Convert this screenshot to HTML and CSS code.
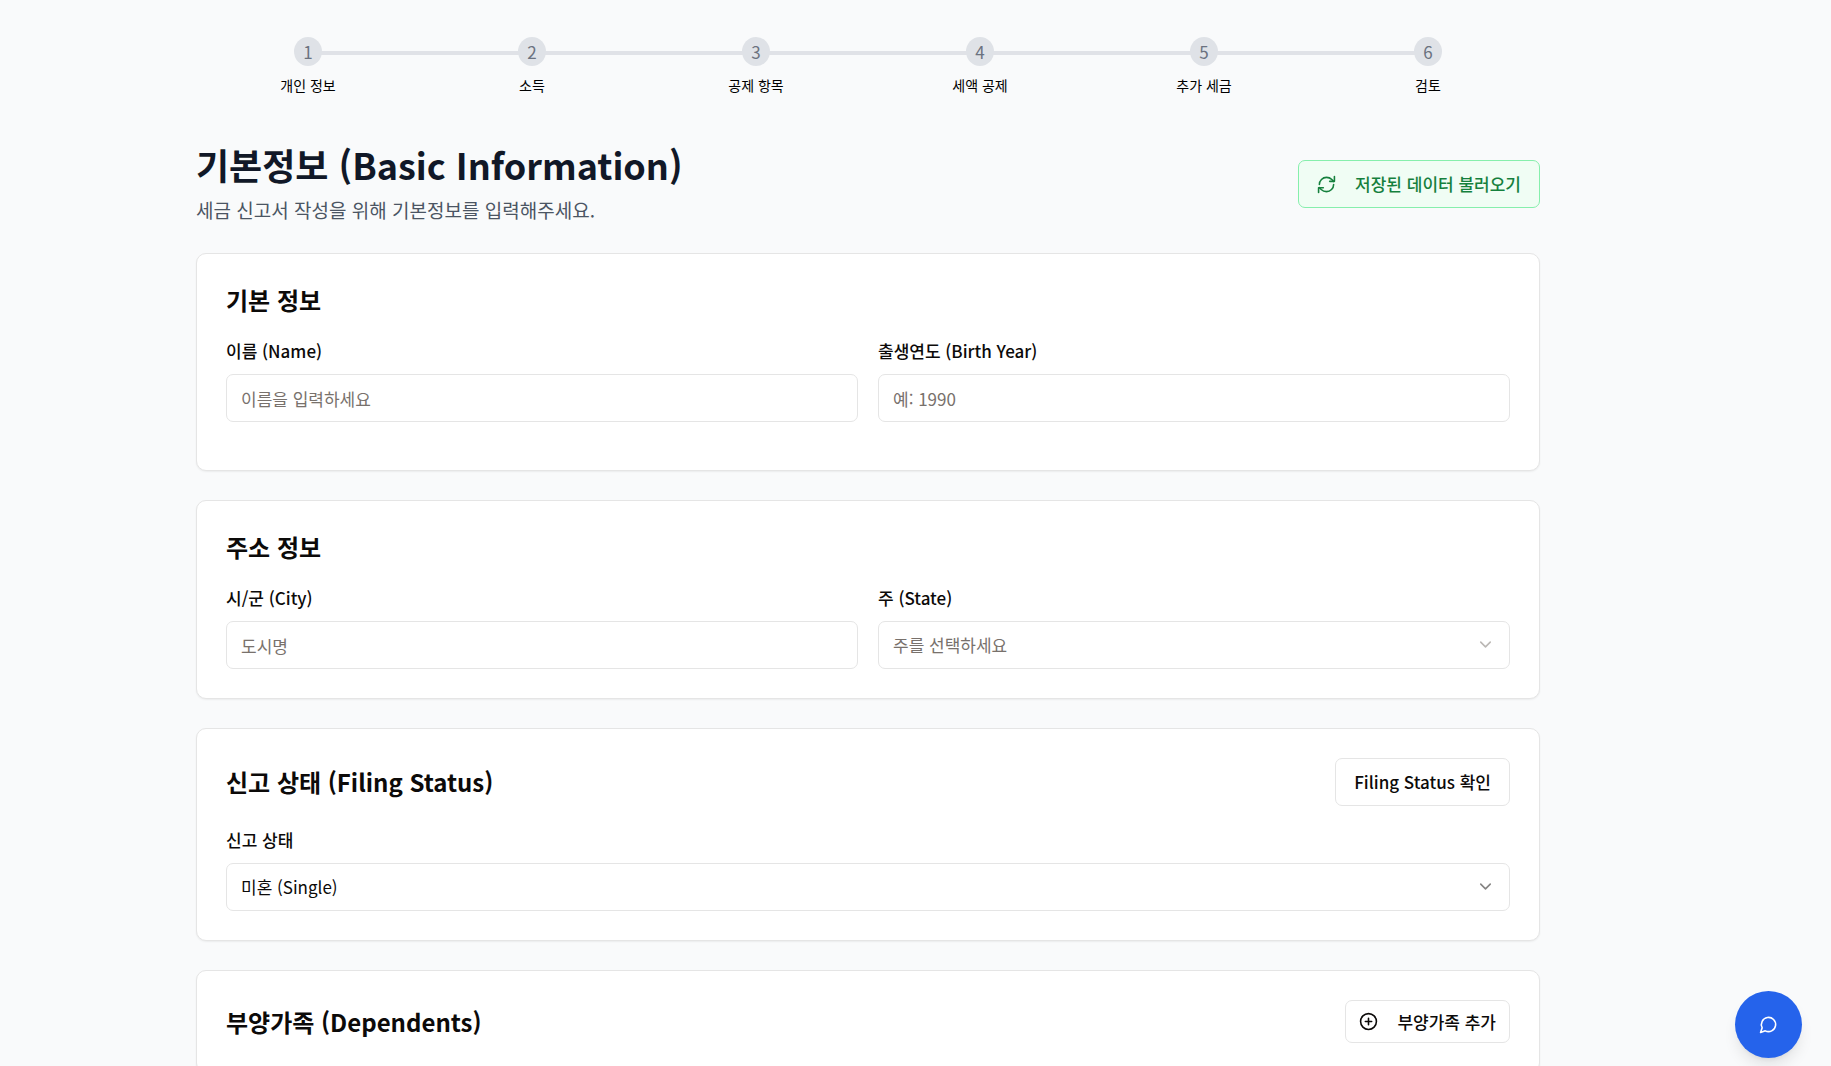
FILE: index.html
```html
<!DOCTYPE html>
<html lang="ko">
<head>
<meta charset="utf-8">
<meta name="viewport" content="width=device-width, initial-scale=1">
<title>기본정보 (Basic Information)</title>
<link rel="stylesheet" href="styles.css">
</head>
<body>
<main class="page">
  <ol class="steps">
    <li class="step"><span class="step-number">1</span><span class="step-label">개인 정보</span></li>
    <li class="step"><span class="step-number">2</span><span class="step-label">소득</span></li>
    <li class="step"><span class="step-number">3</span><span class="step-label">공제 항목</span></li>
    <li class="step"><span class="step-number">4</span><span class="step-label">세액 공제</span></li>
    <li class="step"><span class="step-number">5</span><span class="step-label">추가 세금</span></li>
    <li class="step"><span class="step-number">6</span><span class="step-label">검토</span></li>
  </ol>

  <header class="page-header">
    <div>
      <h1 class="page-title">기본정보 (Basic Information)</h1>
      <p class="page-subtitle">세금 신고서 작성을 위해 기본정보를 입력해주세요.</p>
    </div>
    <button type="button" class="button button-load">
      <svg class="icon" viewBox="0 0 24 24" aria-hidden="true"><path d="M3 12a9 9 0 0 1 9-9 9.75 9.75 0 0 1 6.74 2.74L21 8"/><path d="M22 2v6h-6"/><path d="M21 12a9 9 0 0 1-9 9 9.75 9.75 0 0 1-6.74-2.74L3 16"/><path d="M8 16H2v6"/></svg>
      저장된 데이터 불러오기
    </button>
  </header>

  <form class="form">
    <section class="card card-basic">
      <h2 class="card-title">기본 정보</h2>
      <div class="fields">
        <div class="field">
          <label class="label" for="name">이름 (Name)</label>
          <input class="control" id="name" type="text" placeholder="이름을 입력하세요">
        </div>
        <div class="field">
          <label class="label" for="birth-year">출생연도 (Birth Year)</label>
          <input class="control" id="birth-year" type="text" inputmode="numeric" placeholder="예: 1990">
        </div>
      </div>
    </section>

    <section class="card">
      <h2 class="card-title">주소 정보</h2>
      <div class="fields">
        <div class="field">
          <label class="label" for="city">시/군 (City)</label>
          <input class="control" id="city" type="text" placeholder="도시명">
        </div>
        <div class="field">
          <label class="label" for="state">주 (State)</label>
          <div class="select">
            <select class="control placeholder" id="state"><option>주를 선택하세요</option></select>
            <svg class="chevron chevron-muted" viewBox="0 0 24 24" aria-hidden="true"><path d="m6 9 6 6 6-6"/></svg>
          </div>
        </div>
      </div>
    </section>

    <section class="card">
      <div class="card-header">
        <h2 class="card-title">신고 상태 (Filing Status)</h2>
        <button type="button" class="button">Filing Status 확인</button>
      </div>
      <div class="field">
        <label class="label" for="status">신고 상태</label>
        <div class="select">
          <select class="control" id="status"><option>미혼 (Single)</option></select>
          <svg class="chevron" viewBox="0 0 24 24" aria-hidden="true"><path d="m6 9 6 6 6-6"/></svg>
        </div>
      </div>
    </section>

    <section class="card">
      <div class="card-header">
        <h2 class="card-title">부양가족 (Dependents)</h2>
        <button type="button" class="button button-small">
          <svg class="icon" viewBox="0 0 24 24" aria-hidden="true"><circle cx="12" cy="12" r="10"/><path d="M8 12h8M12 8v8"/></svg>
          부양가족 추가
        </button>
      </div>
    </section>
  </form>
</main>
<button type="button" class="chat" aria-label="채팅">
  <svg class="icon" viewBox="0 0 24 24" aria-hidden="true"><path d="M7.9 20A9 9 0 1 0 4 16.1L2 22Z"/></svg>
</button>
</body>
</html>
```

FILE: styles.css
```css
* {
  box-sizing: border-box;
}

body {
  margin: 0;
  padding: 0 95px 0 0;
  background: #f9fafb;
  color: #0c0a09;
  font: 400 17px/24px "Noto Sans CJK KR", "Noto Sans", sans-serif;
}

h1, h2, p, ol {
  margin: 0;
  padding: 0;
}

.page {
  max-width: 1344px;
  margin: 0 auto;
  padding: 37px 0 29px;
}

/* Progress steps */
.steps {
  display: grid;
  grid-template-columns: repeat(6, 1fr);
  list-style: none;
}

.step {
  position: relative;
  display: flex;
  flex-direction: column;
  align-items: center;
  gap: 9px;
}

.step + .step::before {
  content: "";
  position: absolute;
  top: 14px;
  right: 50%;
  width: 100%;
  height: 4px;
  background: #e0e2e7;
}

.step-number {
  z-index: 1;
  width: 28px;
  height: 29px;
  border-radius: 50%;
  background: #dfe2e7;
  color: #6b7280;
  line-height: 30px;
  text-align: center;
}

.step-label {
  color: #000;
  font-size: 14px;
  line-height: 20px;
}

/* Title row */
.page-header {
  display: flex;
  align-items: center;
  justify-content: space-between;
  margin: 49px 0 29px;
}

.page-title {
  color: #111827;
  font-size: 36px;
  font-weight: 700;
  line-height: 40px;
}

.page-subtitle {
  margin-top: 12px;
  color: #4b5563;
  font-size: 19px;
  line-height: 28px;
}

.button {
  display: inline-flex;
  align-items: center;
  gap: 19px;
  height: 48px;
  padding: 0 18px;
  border: 1px solid #e5e5e5;
  border-radius: 7px;
  background: #fff;
  color: #0c0a09;
  font: inherit;
  font-weight: 500;
  white-space: nowrap;
}

.button-load {
  border-color: #86efac;
  background: #f0fdf4;
  color: #15803d;
}

.button-small {
  height: 43px;
  padding: 0 13px;
}

.icon {
  width: 19px;
  height: 19px;
  fill: none;
  stroke: currentColor;
  stroke-width: 2;
  stroke-linecap: round;
  stroke-linejoin: round;
}

/* Cards */
.form {
  display: grid;
  gap: 29px;
}

.card {
  display: flex;
  flex-direction: column;
  gap: 22px;
  padding: 29px;
  border: 1px solid #e5e5e5;
  border-radius: 10px;
  background: #fff;
  box-shadow: 0 1px 2px rgba(0, 0, 0, 0.06);
}

.card-basic {
  padding-bottom: 48px;
}

.card-title {
  font-size: 24px;
  font-weight: 700;
  line-height: 34px;
}

.card-header {
  display: flex;
  align-items: center;
  justify-content: space-between;
}

.fields {
  display: grid;
  grid-template-columns: 1fr 1fr;
  gap: 20px;
}

.field {
  display: flex;
  flex-direction: column;
  gap: 11px;
}

.label {
  font-weight: 500;
}

.control {
  width: 100%;
  height: 48px;
  padding: 0 14px;
  border: 1px solid #e5e5e5;
  border-radius: 7px;
  background: #fff;
  color: #0c0a09;
  font: inherit;
  appearance: none;
}

.control::placeholder,
.placeholder {
  color: #78716c;
}

.select {
  position: relative;
}

.chevron {
  position: absolute;
  top: 14px;
  right: 15px;
  width: 19px;
  height: 19px;
  fill: none;
  stroke: #858483;
  stroke-width: 2;
  stroke-linecap: round;
  stroke-linejoin: round;
  pointer-events: none;
}

.chevron-muted {
  stroke: #bbb8b5;
}

.chat {
  position: fixed;
  right: 29px;
  bottom: 8px;
  display: grid;
  place-items: center;
  width: 67px;
  height: 67px;
  padding: 0;
  border: 0;
  border-radius: 50%;
  background: #2563eb;
  color: #fff;
  box-shadow: 0 10px 15px -3px rgba(0, 0, 0, 0.1), 0 4px 6px -4px rgba(0, 0, 0, 0.1);
}
```
